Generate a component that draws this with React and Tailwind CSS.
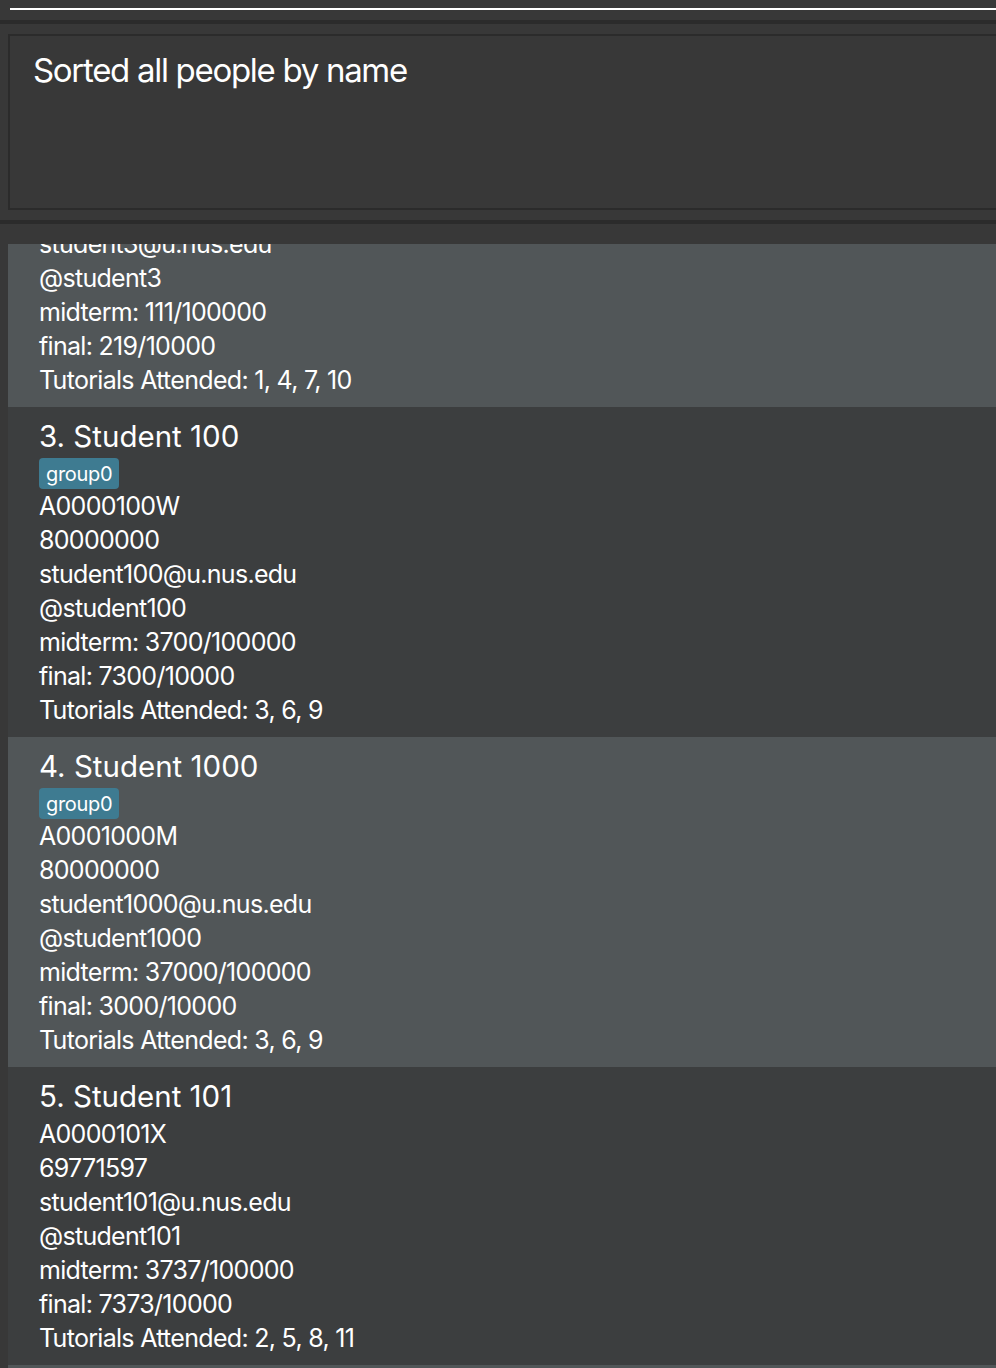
import React from 'react';

const people = [
  {
    index: 2,
    name: 'Student 3',
    tags: [],
    id: 'A0000003L',
    phone: '80000000',
    email: 'student3@u.nus.edu',
    tele: '@student3',
    midterm: '111/100000',
    final: '219/10000',
    tutorials: '1, 4, 7, 10',
  },
  {
    index: 3,
    name: 'Student 100',
    tags: ['group0'],
    id: 'A0000100W',
    phone: '80000000',
    email: 'student100@u.nus.edu',
    tele: '@student100',
    midterm: '3700/100000',
    final: '7300/10000',
    tutorials: '3, 6, 9',
  },
  {
    index: 4,
    name: 'Student 1000',
    tags: ['group0'],
    id: 'A0001000M',
    phone: '80000000',
    email: 'student1000@u.nus.edu',
    tele: '@student1000',
    midterm: '37000/100000',
    final: '3000/10000',
    tutorials: '3, 6, 9',
  },
  {
    index: 5,
    name: 'Student 101',
    tags: [],
    id: 'A0000101X',
    phone: '69771597',
    email: 'student101@u.nus.edu',
    tele: '@student101',
    midterm: '3737/100000',
    final: '7373/10000',
    tutorials: '2, 5, 8, 11',
  },
  {
    index: 6,
    name: 'Student 102',
    tags: [],
    id: 'A0000102Y',
    phone: '80000000',
    email: 'student102@u.nus.edu',
    tele: '@student102',
    midterm: '3800/100000',
    final: '7400/10000',
    tutorials: '3, 6, 9',
  },
];

const PersonCard = ({ person, odd, className = '' }) => (
  <div className={`${odd ? 'bg-[#515658]' : 'bg-[#3c3e3f]'} pl-[31px] pt-[10px] pb-[10px] ${className}`}>
    <div className="h-[40px] flex items-center text-[29.5px] text-white leading-none">
      {person.index}. {person.name}
    </div>
    {person.tags.length > 0 && (
      <div className="flex gap-2 mt-[1px]">
        {person.tags.map((t) => (
          <span key={t} className="h-[31px] px-[7px] rounded-[4px] bg-[#3e7b91] text-white text-[20px] tracking-[-0.3px] flex items-center">
            {t}
          </span>
        ))}
      </div>
    )}
    <div className="text-white text-[25px] leading-[34px] tracking-[-0.7px]">
      <div>{person.id}</div>
      <div>{person.phone}</div>
      <div>{person.email}</div>
      <div>{person.tele}</div>
      <div>midterm: {person.midterm}</div>
      <div>final: {person.final}</div>
      <div>Tutorials Attended: {person.tutorials}</div>
    </div>
  </div>
);

const App = () => {
  return (
    <div
      className="w-[996px] h-[1368px] bg-[#383838] overflow-hidden flex flex-col"
      style={{ fontFamily: 'Inter, "Noto Sans", sans-serif' }}
    >
      {/* Command box underline */}
      <div className="h-[8px] shrink-0" />
      <div className="h-[2px] ml-[10px] bg-white shrink-0" />
      <div className="h-[10px] shrink-0" />
      <div className="h-[4px] bg-[#2b2b2b] shrink-0" />
      <div className="h-[10px] shrink-0" />

      {/* Result display */}
      <div className="ml-[8px] h-[176px] border-2 border-r-0 border-[#2b2b2b] shrink-0 pl-[23px] pt-[12px]">
        <p className="text-[33px] text-white leading-[44px] tracking-[-1.3px]">Sorted all people by name</p>
      </div>

      <div className="h-[10px] shrink-0" />
      <div className="h-[4px] bg-[#2b2b2b] shrink-0" />
      <div className="h-[20px] shrink-0" />

      {/* Person list */}
      <div className="flex-1 ml-[8px] overflow-hidden">
        {people.map((p, i) => (
          <PersonCard key={p.index} person={p} odd={i % 2 === 0} className={i === 0 ? 'mt-[-135px]' : ''} />
        ))}
      </div>
    </div>
  );
};

export default App;
